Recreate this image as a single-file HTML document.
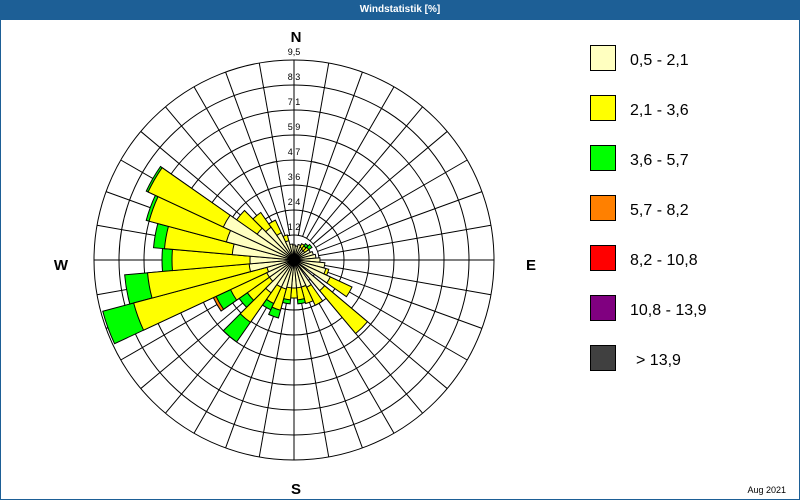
<!DOCTYPE html>
<html><head><meta charset="utf-8"><style>
html,body{margin:0;padding:0;background:#fff}
#wrap{position:relative;width:798px;height:499px;border:1px solid #1d5f96;border-top:none;overflow:hidden;font-family:"Liberation Sans",sans-serif}
#hdr{height:20px;background:#1d5f96;color:#fff;font-size:10px;font-weight:bold;text-align:center;line-height:20px}
</style></head><body>
<div id="wrap"><div id="hdr">Windstatistik [%]</div>
<svg width="800" height="480" viewBox="0 20 800 480" style="position:absolute;left:-1px;top:20px">
<defs>
<path id="w" d="M0 0 L-0.08716 -0.99619 A1 1 0 0 1 0.08716 -0.99619 Z" stroke="#000" stroke-width="1" vector-effect="non-scaling-stroke"/>
</defs>
<g transform="translate(294,260)" fill="none" stroke="#000" stroke-width="1">
<circle r="25"/><circle r="50"/><circle r="75"/><circle r="100"/><circle r="125"/><circle r="150"/><circle r="175"/><circle r="200"/>
<g id="sp">
<line x1="0" y1="-25" x2="0" y2="-200"/>
<line x1="0" y1="-25" x2="0" y2="-200" transform="rotate(10)"/>
<line x1="0" y1="-25" x2="0" y2="-200" transform="rotate(20)"/>
<line x1="0" y1="-25" x2="0" y2="-200" transform="rotate(30)"/>
<line x1="0" y1="-25" x2="0" y2="-200" transform="rotate(40)"/>
<line x1="0" y1="-25" x2="0" y2="-200" transform="rotate(50)"/>
<line x1="0" y1="-25" x2="0" y2="-200" transform="rotate(60)"/>
<line x1="0" y1="-25" x2="0" y2="-200" transform="rotate(70)"/>
<line x1="0" y1="-25" x2="0" y2="-200" transform="rotate(80)"/>
</g>
<use href="#sp" transform="rotate(90)"/><use href="#sp" transform="rotate(180)"/><use href="#sp" transform="rotate(270)"/>
<line x1="0" y1="-200" x2="0" y2="200"/><line x1="-200" y1="0" x2="200" y2="0"/>
</g>
<g transform="translate(294,260)">
<!-- orange -->
<use href="#w" fill="#ff8000" transform="rotate(240) scale(89)"/>
<!-- green -->
<g fill="#00ff00">
<use href="#w" transform="rotate(40) scale(20)"/>
<use href="#w" transform="rotate(50) scale(22)"/>
<use href="#w" transform="rotate(170) scale(44)"/>
<use href="#w" transform="rotate(190) scale(44)"/>
<use href="#w" transform="rotate(200) scale(60)"/>
<use href="#w" transform="rotate(210) scale(55)"/>
<use href="#w" transform="rotate(220) scale(100)"/>
<use href="#w" transform="rotate(230) scale(67)"/>
<use href="#w" transform="rotate(240) scale(86)"/>
<use href="#w" transform="rotate(250) scale(198)"/>
<use href="#w" transform="rotate(260) scale(170)"/>
<use href="#w" transform="rotate(270) scale(132)"/>
<use href="#w" transform="rotate(280) scale(141)"/>
<use href="#w" transform="rotate(290) scale(153)"/>
<use href="#w" transform="rotate(300) scale(163)"/>
</g>
<g fill="#ffff00">
<use href="#w" transform="rotate(30) scale(18)"/>
<use href="#w" transform="rotate(40) scale(17)"/>
<use href="#w" transform="rotate(50) scale(18)"/>
<use href="#w" transform="rotate(110) scale(36)"/>
<use href="#w" transform="rotate(120) scale(64)"/>
<use href="#w" transform="rotate(135) scale(96)"/>
<use href="#w" transform="rotate(150) scale(50)"/>
<use href="#w" transform="rotate(160) scale(45)"/>
<use href="#w" transform="rotate(170) scale(40)"/>
<use href="#w" transform="rotate(180) scale(38)"/>
<use href="#w" transform="rotate(190) scale(40)"/>
<use href="#w" transform="rotate(200) scale(52)"/>
<use href="#w" transform="rotate(210) scale(48)"/>
<use href="#w" transform="rotate(220) scale(76)"/>
<use href="#w" transform="rotate(230) scale(57)"/>
<use href="#w" transform="rotate(240) scale(70)"/>
<use href="#w" transform="rotate(250) scale(166)"/>
<use href="#w" transform="rotate(260) scale(147)"/>
<use href="#w" transform="rotate(270) scale(122)"/>
<use href="#w" transform="rotate(280) scale(130)"/>
<use href="#w" transform="rotate(290) scale(150)"/>
<use href="#w" transform="rotate(300) scale(161)"/>
<use href="#w" transform="rotate(310) scale(70)"/>
<use href="#w" transform="rotate(320) scale(58)"/>
<use href="#w" transform="rotate(330) scale(44)"/>
<use href="#w" transform="rotate(340) scale(26)"/>
</g>
<g fill="#ffffc0">
<use href="#w" transform="rotate(0) scale(15)"/>
<use href="#w" transform="rotate(10) scale(14)"/>
<use href="#w" transform="rotate(20) scale(16)"/>
<use href="#w" transform="rotate(30) scale(14)"/>
<use href="#w" transform="rotate(40) scale(13)"/>
<use href="#w" transform="rotate(50) scale(13)"/>
<use href="#w" transform="rotate(60) scale(18)"/>
<use href="#w" transform="rotate(70) scale(20)"/>
<use href="#w" transform="rotate(80) scale(22)"/>
<use href="#w" transform="rotate(90) scale(26)"/>
<use href="#w" transform="rotate(100) scale(31)"/>
<use href="#w" transform="rotate(110) scale(33)"/>
<use href="#w" transform="rotate(120) scale(40)"/>
<use href="#w" transform="rotate(135) scale(40)"/>
<use href="#w" transform="rotate(150) scale(30)"/>
<use href="#w" transform="rotate(160) scale(28)"/>
<use href="#w" transform="rotate(170) scale(28)"/>
<use href="#w" transform="rotate(180) scale(28)"/>
<use href="#w" transform="rotate(190) scale(28)"/>
<use href="#w" transform="rotate(200) scale(30)"/>
<use href="#w" transform="rotate(210) scale(30)"/>
<use href="#w" transform="rotate(220) scale(40)"/>
<use href="#w" transform="rotate(230) scale(30)"/>
<use href="#w" transform="rotate(240) scale(30)"/>
<use href="#w" transform="rotate(250) scale(28)"/>
<use href="#w" transform="rotate(260) scale(45)"/>
<use href="#w" transform="rotate(270) scale(44)"/>
<use href="#w" transform="rotate(280) scale(62)"/>
<use href="#w" transform="rotate(290) scale(70)"/>
<use href="#w" transform="rotate(300) scale(78)"/>
<use href="#w" transform="rotate(310) scale(45)"/>
<use href="#w" transform="rotate(320) scale(40)"/>
<use href="#w" transform="rotate(330) scale(30)"/>
<use href="#w" transform="rotate(340) scale(20)"/>
<use href="#w" transform="rotate(350) scale(16)"/>
</g>
<circle r="5" fill="#000"/>
</g>
<g font-family="Liberation Sans, sans-serif" font-size="9" fill="#000" text-anchor="middle">
<text x="294" y="55">9,5</text><text x="294" y="80">8,3</text><text x="294" y="105">7,1</text><text x="294" y="130">5,9</text>
<text x="294" y="155">4,7</text><text x="294" y="180">3,6</text><text x="294" y="205">2,4</text><text x="294" y="230">1,2</text>
</g>
<g font-family="Liberation Sans, sans-serif" font-size="15" font-weight="bold" fill="#000" text-anchor="middle">
<text x="296" y="42">N</text><text x="61" y="270">W</text><text x="531" y="270">E</text><text x="296" y="494">S</text>
</g>
<g stroke="#000" stroke-width="1">
<rect x="590.5" y="45.5" width="25" height="25" fill="#ffffc0"/>
<rect x="590.5" y="95.5" width="25" height="25" fill="#ffff00"/>
<rect x="590.5" y="145.5" width="25" height="25" fill="#00ff00"/>
<rect x="590.5" y="195.5" width="25" height="25" fill="#ff8000"/>
<rect x="590.5" y="245.5" width="25" height="25" fill="#ff0000"/>
<rect x="590.5" y="295.5" width="25" height="25" fill="#800080"/>
<rect x="590.5" y="345.5" width="25" height="25" fill="#404040"/>
</g>
<g font-family="Liberation Sans, sans-serif" font-size="16" fill="#000">
<text x="630" y="65">0,5 - 2,1</text><text x="630" y="115">2,1 - 3,6</text><text x="630" y="165">3,6 - 5,7</text>
<text x="630" y="215">5,7 - 8,2</text><text x="630" y="265">8,2 - 10,8</text><text x="630" y="315">10,8 - 13,9</text>
<text x="636" y="365">&gt; 13,9</text>
</g>
<text x="786" y="493" font-family="Liberation Sans, sans-serif" font-size="9" text-anchor="end">Aug 2021</text>
</svg>
</div>
</body></html>
